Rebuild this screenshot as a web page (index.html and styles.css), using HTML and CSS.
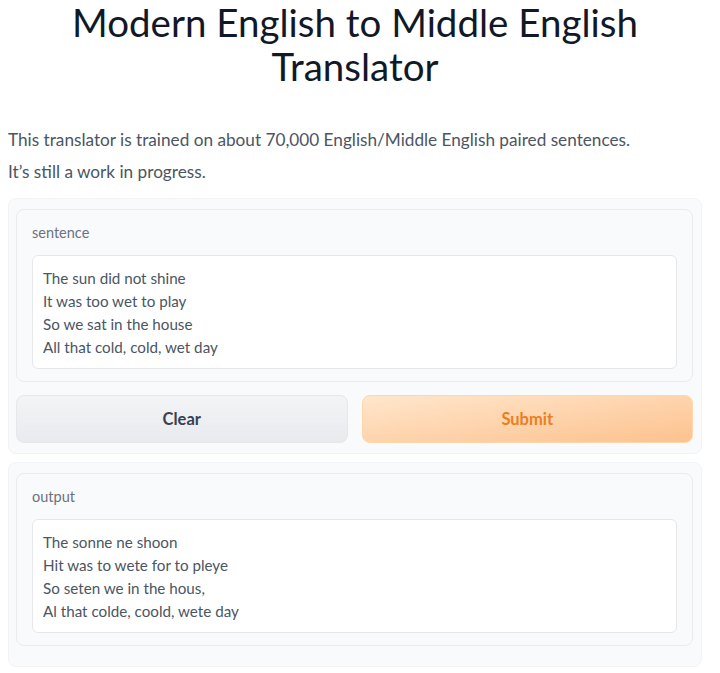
FILE: index.html
```html
<!DOCTYPE html>
<html>
<head>
    <meta charset='utf-8'>
    <title>Middle English Translator</title>
    <link rel="stylesheet" href="styles.css">
</head>
<body>
    <h1 class='title'>Modern English to Middle English Translator</h1>
    <div class='intro'>
        <p>This translator is trained on about 70,000 English/Middle English paired sentences.</p>
        <p>It’s still a work in progress.</p>
    </div>

    <div class='panel'>
        <div class='block'>
            <div class='label'>sentence</div>
            <div class='textbox'>
                <div>The sun did not shine</div>
                <div>It was too wet to play</div>
                <div>So we sat in the house</div>
                <div>All that cold, cold, wet day</div>
            </div>
        </div>
        <div class='buttons'>
            <div class='button clear'>Clear</div>
            <div class='button submit'>Submit</div>
        </div>
    </div>

    <div class='panel output-panel'>
        <div class='block'>
            <div class='label'>output</div>
            <div class='textbox'>
                <div>The sonne ne shoon</div>
                <div>Hit was to wete for to pleye</div>
                <div>So seten we in the hous,</div>
                <div>Al that colde, coold, wete day</div>
            </div>
        </div>
    </div>
</body>
</html>
```

FILE: styles.css
```css
body {
    margin: 0;
    padding: 0 18px 0 8px;
    font-family: Lato, "Noto Sans", sans-serif;
    color: #374151;
    background: #fff;
}
.title {
    margin: 0;
    text-align: center;
    font-size: 38.5px;
    line-height: 44px;
    font-weight: 400;
    color: #111827;
}
.intro {
    margin-top: 36px;
    font-size: 17.2px;
    color: #4b5563;
}
.intro p {
    margin: 0;
    line-height: 32px;
}
.panel {
    margin-top: 10px;
    background: #f9fafb;
    border: 1px solid #f1f3f6;
    border-radius: 8px;
    padding: 10px 8px 10px 7px;
}
.block {
    background: #f9fafb;
    border: 1px solid #e9ebef;
    border-radius: 8px;
    padding: 13px 15px 12px 15px;
}
.label {
    font-size: 14.5px;
    color: #6b7280;
    line-height: 20px;
    margin-bottom: 12px;
}
.textbox {
    background: #fff;
    border: 1px solid #e5e7eb;
    border-radius: 6px;
    padding: 11px 10px 9px 10px;
    font-size: 15.2px;
    line-height: 23px;
    color: #4b5563;
}
.buttons {
    display: grid;
    grid-template-columns: 1fr 1fr;
    gap: 14px;
    margin-top: 13px;
}
.button {
    height: 46px;
    display: flex;
    justify-content: center;
    align-items: center;
    border-radius: 8px;
    font-size: 16.5px;
    font-weight: 700;
}
.clear {
    background: linear-gradient(to bottom, #f3f4f6, #e8eaee);
    border: 1px solid #e5e7eb;
    color: #374151;
}
.submit {
    background: linear-gradient(to bottom right, #ffe6cc, #fdc28e);
    border: 1px solid #fed7aa;
    color: #ea7f1f;
}
.output-panel {
    margin-top: 8px;
    padding-bottom: 20px;
}
```
